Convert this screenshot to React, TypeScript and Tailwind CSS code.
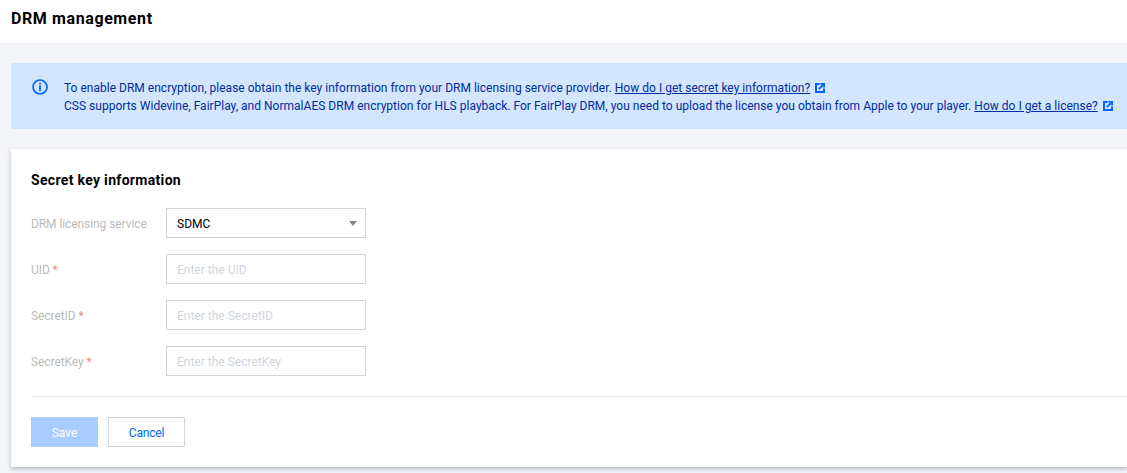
import React from "react";

const font = { fontFamily: "Roboto, sans-serif" };

const LinkIcon = () => (
  <svg width="10" height="10" viewBox="0 0 10 10" className="inline-block ml-[5px] align-[-1px]">
    <path d="M4.5 1 H1 V9 H9 V5.5" fill="none" stroke="#0066ff" strokeWidth="2" />
    <path d="M3.8 6.2 L8 2" stroke="#0066ff" strokeWidth="1.8" />
    <path d="M5.4 0.9 H9.1 V4.6" fill="none" stroke="#0066ff" strokeWidth="1.8" />
  </svg>
);

const Field = ({ label, placeholder }: { label: string; placeholder: string }) => (
  <div className="flex items-center h-[30px]">
    <label className="w-[135px] text-xs tracking-[-0.08px] text-[#bbbbbb] pt-[2px]">
      {label} <span className="text-[#f08a8a]">*</span>
    </label>
    <input
      placeholder={placeholder}
      className="w-[200px] h-[30px] border border-[#cfd5de] px-[10px] pt-[1px] text-xs outline-none bg-white placeholder:text-[#cfd5de]"
    />
  </div>
);

export default function App() {
  return (
    <div className="h-[473px] overflow-hidden bg-[#f2f4f8]" style={font}>
      <div className="h-[43px] bg-white flex items-center px-[11px] pb-[6px]">
        <h1 className="text-[16px] tracking-[0.6px] font-bold text-black">DRM management</h1>
      </div>

      <div className="pl-[11px] pt-5">
        <div className="h-[66px] bg-[#d4e5fe] flex pl-[21px] pt-[16px] text-xs leading-[18px] tracking-[0.015px] text-[#002da0]">
          <svg width="16" height="16" viewBox="0 0 16 16" className="mr-[16px] shrink-0">
            <circle cx="8" cy="8" r="7" fill="none" stroke="#0066ff" strokeWidth="1.7" />
            <rect x="7.1" y="3.6" width="1.8" height="1.8" fill="#0066ff" />
            <rect x="7.1" y="6.4" width="1.8" height="5.8" fill="#0066ff" />
          </svg>
          <div className="whitespace-nowrap">
            <p>
              To enable DRM encryption, please obtain the key information from your DRM licensing service provider.{" "}
              <a className="underline">How do I get secret key information?</a>
              <LinkIcon />
            </p>
            <p>
              CSS supports Widevine, FairPlay, and NormalAES DRM encryption for HLS playback. For FairPlay DRM, you need to upload the license you obtain from Apple to your player.{" "}
              <a className="underline">How do I get a license?</a>
              <LinkIcon />
            </p>
          </div>
        </div>

        <div className="mt-5 h-[318px] bg-white shadow-[0_2px_4px_rgba(54,58,80,0.32)] pl-5 pt-[22px]">
          <h2 className="text-[14px] leading-[18px] tracking-[0.32px] font-bold text-black">Secret key information</h2>

          <div className="mt-[19px] flex flex-col gap-4">
            <div className="flex items-center h-[30px]">
              <label className="w-[135px] text-xs tracking-[-0.08px] text-[#bbbbbb] pt-[2px]">DRM licensing service</label>
              <div className="w-[200px] h-[30px] border border-[#cfd5de] pl-[10px] pr-2 pt-[1px] flex items-center justify-between text-xs text-black">
                <span>SDMC</span>
                <span className="w-0 h-0 border-l-[4.5px] border-r-[4.5px] border-t-[5px] border-l-transparent border-r-transparent border-t-[#888888]" />
              </div>
            </div>
            <Field label="UID" placeholder="Enter the UID" />
            <Field label="SecretID" placeholder="Enter the SecretID" />
            <Field label="SecretKey" placeholder="Enter the SecretKey" />
          </div>

          <div className="mt-5 border-t border-[#e7eaef]" />

          <div className="mt-5 flex gap-[10px]">
            <button className="w-[67px] h-[30px] bg-[#a9ccff] text-white text-xs pt-[1px]">Save</button>
            <button className="w-[77px] h-[30px] bg-white border border-[#cfd5de] text-[#0066ff] text-xs tracking-[-0.2px] pt-[1px]">Cancel</button>
          </div>
        </div>
      </div>
    </div>
  );
}
